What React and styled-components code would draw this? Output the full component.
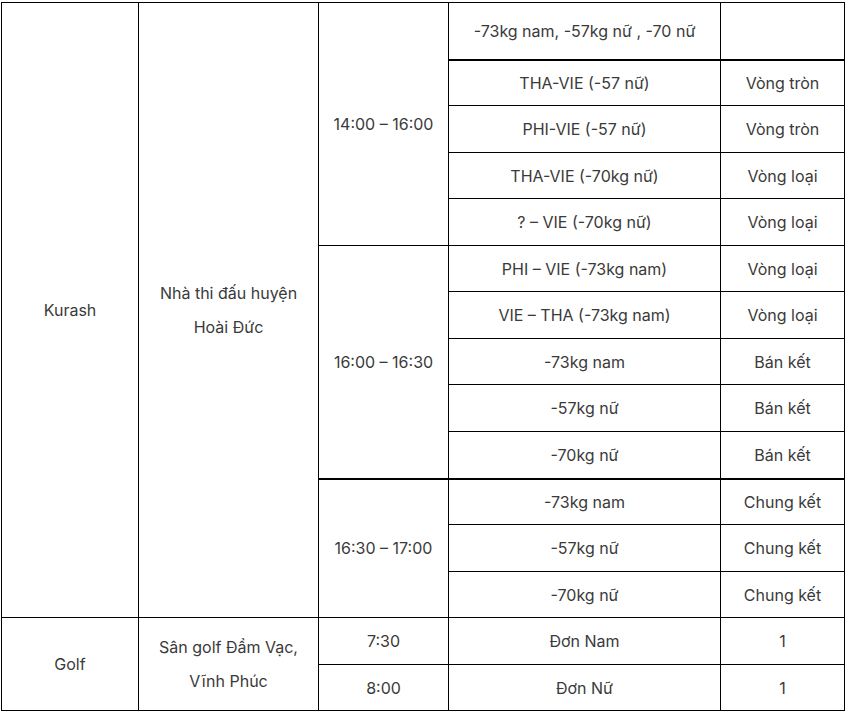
import React from 'react'
import styled, {createGlobalStyle} from 'styled-components'

const Global = createGlobalStyle`
	body {
		margin: 0;
		background: #fff;
	}
`

const Page = styled.div`
	padding: 2px 0 0 1px;
`

const Table = styled.table`
	border-collapse: collapse;
	table-layout: fixed;
	width: 844px;
	font-family: Inter, "Noto Sans", sans-serif;
	font-size: 16px;
	line-height: 34px;
	color: #3a3a3a;
`

const Row = styled.tr`
	height: ${p => p.h}px;
`

const Cell = styled.td`
	border: 1px solid #000;
	border-top-width: ${p => p.thick ? 2 : 1}px;
	padding: 0 16px;
	text-align: center;
	vertical-align: middle;
`

const TimeCell = styled(Cell)`
	padding: 0 4px;
	white-space: nowrap;
`

const widths = [137, 180, 130, 272, 124]

const heights = [57, 46, 47, 46, 47, 46, 47, 46, 47, 47, 46, 47, 46, 47, 46]

const kurash = [
	['-73kg nam, -57kg nữ , -70 nữ', ''],
	['THA-VIE (-57 nữ)', 'Vòng tròn'],
	['PHI-VIE (-57 nữ)', 'Vòng tròn'],
	['THA-VIE (-70kg nữ)', 'Vòng loại'],
	['? – VIE (-70kg nữ)', 'Vòng loại'],
	['PHI – VIE (-73kg nam)', 'Vòng loại'],
	['VIE – THA (-73kg nam)', 'Vòng loại'],
	['-73kg nam', 'Bán kết'],
	['-57kg nữ', 'Bán kết'],
	['-70kg nữ', 'Bán kết'],
	['-73kg nam', 'Chung kết'],
	['-57kg nữ', 'Chung kết'],
	['-70kg nữ', 'Chung kết'],
]

const slots = {0: ['14:00 – 16:00', 5], 5: ['16:00 – 16:30', 5], 10: ['16:30 – 17:00', 3]}

function App() {
	return (
		<Page>
			<Global />
			<Table>
				<colgroup>
					{widths.map((w, i) => <col key={i} style={{width: w}} />)}
				</colgroup>
				<tbody>
					{kurash.map(([match, round], i) => (
						<Row key={i} h={heights[i]}>
							{i === 0 && <Cell rowSpan={13}>Kurash</Cell>}
							{i === 0 && <Cell rowSpan={13}>Nhà thi đấu huyện Hoài Đức</Cell>}
							{slots[i] && <TimeCell rowSpan={slots[i][1]} thick={i === 10}>{slots[i][0]}</TimeCell>}
							<Cell thick={i === 1 || i === 10}>{match}</Cell>
							<Cell thick={i === 1 || i === 10}>{round}</Cell>
						</Row>
					))}
					<Row h={heights[13]}>
						<Cell rowSpan={2}>Golf</Cell>
						<Cell rowSpan={2}>Sân golf Đầm Vạc, Vĩnh Phúc</Cell>
						<TimeCell>7:30</TimeCell>
						<Cell>Đơn Nam</Cell>
						<Cell>1</Cell>
					</Row>
					<Row h={heights[14]}>
						<TimeCell>8:00</TimeCell>
						<Cell>Đơn Nữ</Cell>
						<Cell>1</Cell>
					</Row>
				</tbody>
			</Table>
		</Page>
	)
}

export default App
